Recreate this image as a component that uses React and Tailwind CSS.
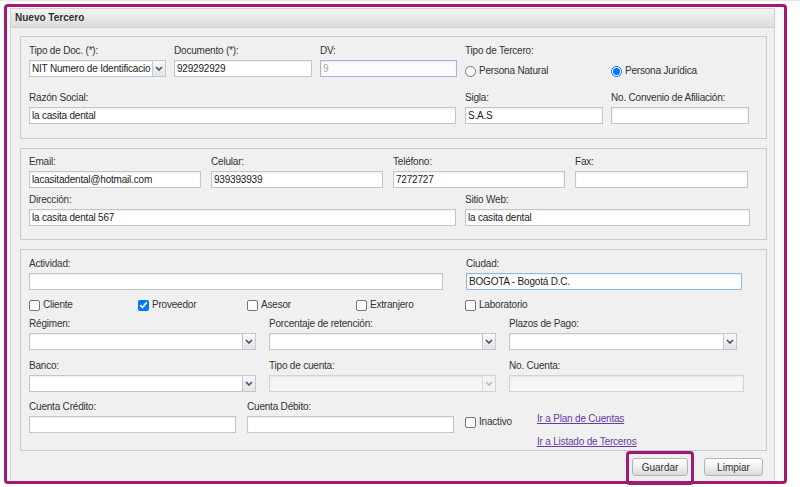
import React from "react";

const font = "font-['Liberation_Sans',Arial,sans-serif]";

function Chevron({ color = "#34508a" }) {
  return (
    <svg width="8" height="5" viewBox="0 0 8 5">
      <path d="M1 1 L4 4 L7 1" fill="none" stroke={color} strokeWidth="1.6" />
    </svg>
  );
}

function Label({ children }) {
  return <div className="h-[14px] leading-[14px] text-[#333] whitespace-nowrap tracking-[-0.2px]">{children}</div>;
}

function Input({ value = "", tone = "normal" }) {
  const tones = {
    normal: "border-[#c4c4ca] bg-white text-[#222]",
    dv: "border-[#a9b0e4] bg-[#fbfbff] text-[#aaa]",
    focus: "border-[#8fb6e6] bg-white text-[#222]",
    disabled: "border-[#d2d2d6] bg-[#f6f6f6] text-[#999]",
  };
  return (
    <div
      className={`mt-[2px] h-[17px] border ${tones[tone]} px-[2px] leading-[15px] tracking-[-0.2px] overflow-hidden whitespace-nowrap shadow-[inset_0_1px_2px_rgba(0,0,0,0.07)]`}
    >
      {value}
    </div>
  );
}

function Select({ value = "", disabled = false }) {
  return (
    <div
      className={`mt-[2px] h-[17px] border flex ${
        disabled ? "border-[#d2d2d6] bg-[#f4f4f4]" : "border-[#c4c4ca] bg-white"
      } shadow-[inset_0_1px_2px_rgba(0,0,0,0.07)]`}
    >
      <div className="flex-1 min-w-0 px-[2px] leading-[15px] tracking-[-0.2px] text-[#222] overflow-hidden whitespace-nowrap">
        {value}
      </div>
      <div
        className={`w-[13px] shrink-0 border-l flex items-center justify-center ${
          disabled ? "border-[#dadade] bg-[#f2f2f2]" : "border-[#c4c4ca] bg-gradient-to-b from-[#f8f8f8] to-[#e4e4e4]"
        }`}
      >
        <Chevron color={disabled ? "#b4b8c4" : "#34508a"} />
      </div>
    </div>
  );
}

function Field({ label, w, ml, children }) {
  return (
    <div className={`${w} ${ml || ""} shrink-0`}>
      <Label>{label}</Label>
      {children}
    </div>
  );
}

function Check({ label, checked, w }) {
  return (
    <div className={`${w || ""} h-[14px] flex items-center gap-[3px] shrink-0`}>
      {checked ? (
        <span className="w-[11px] h-[11px] rounded-[2px] bg-[#0075ff] flex items-center justify-center">
          <svg width="9" height="8" viewBox="0 0 9 8">
            <path d="M1.2 4.2 L3.5 6.4 L7.8 1.4" fill="none" stroke="#fff" strokeWidth="1.7" />
          </svg>
        </span>
      ) : (
        <span className="w-[11px] h-[11px] rounded-[2px] border border-[#767676] bg-white" />
      )}
      <span className="text-[#333] leading-[14px] tracking-[-0.2px] whitespace-nowrap">{label}</span>
    </div>
  );
}

function Radio({ label, checked, w }) {
  return (
    <div className={`${w || ""} h-[14px] flex items-center gap-[3px] shrink-0`}>
      {checked ? (
        <span className="w-[11px] h-[11px] rounded-full border border-[#0075ff] bg-white flex items-center justify-center">
          <span className="w-[7px] h-[7px] rounded-full bg-[#0075ff]" />
        </span>
      ) : (
        <span className="w-[11px] h-[11px] rounded-full border border-[#767676] bg-white" />
      )}
      <span className="text-[#333] leading-[14px] tracking-[-0.2px] whitespace-nowrap">{label}</span>
    </div>
  );
}

function Fieldset({ className, children }) {
  return <div className={`w-[747px] border border-[#c8c8d6] pl-[8px] ${className}`}>{children}</div>;
}

export default function App() {
  return (
    <div className={`w-[800px] h-[487px] bg-white relative overflow-hidden text-[10px] ${font}`}>
      <div className="h-[4px] border-t border-[#e4e4e4]" />
      <div className="ml-[4px] w-[783px] h-[480px] border-[3px] border-[#a01a70] rounded-[4px] bg-[#fbfbfb] pl-[3px] pt-[1px]">
        <div className="w-[765px] h-full border border-b-0 border-[#cfcfcf] bg-[#f0f0f0] flex flex-col">
          <div className="h-[19px] border-b border-[#d0d0d0] bg-gradient-to-b from-[#f3f3f3] to-[#dddddd] pl-[4px] leading-[18px] font-bold text-[#333]">
            Nuevo Tercero
          </div>

          <div className="pl-[9px] pt-[8px]">
            <Fieldset className="pt-[7px] pb-[14px]">
              <div className="flex items-start">
                <Field label="Tipo de Doc. (*):" w="w-[137px]">
                  <Select value="NIT Numero de Identificacio" />
                </Field>
                <Field label="Documento (*):" w="w-[138px]" ml="ml-[8px]">
                  <Input value="929292929" />
                </Field>
                <Field label="DV:" w="w-[137px]" ml="ml-[8px]">
                  <Input value="9" tone="dv" />
                </Field>
                <div className="ml-[8px] w-[284px] h-[33px]">
                  <Label>Tipo de Tercero:</Label>
                  <div className="mt-[6px] flex">
                    <Radio label="Persona Natural" w="w-[146px]" />
                    <Radio label="Persona Jurídica" checked />
                  </div>
                </div>
              </div>
              <div className="mt-[14px] flex items-start">
                <Field label="Razón Social:" w="w-[427px]">
                  <Input value="la casita dental" />
                </Field>
                <Field label="Sigla:" w="w-[138px]" ml="ml-[9px]">
                  <Input value="S.A.S" />
                </Field>
                <Field label="No. Convenio de Afiliación:" w="w-[138px]" ml="ml-[8px]">
                  <Input />
                </Field>
              </div>
            </Fieldset>

            <Fieldset className="mt-[9px] pt-[6px] pb-[13px]">
              <div className="flex items-start">
                <Field label="Email:" w="w-[172px]">
                  <Input value="lacasitadental@hotmail.com" />
                </Field>
                <Field label="Celular:" w="w-[172px]" ml="ml-[10px]">
                  <Input value="939393939" />
                </Field>
                <Field label="Teléfono:" w="w-[172px]" ml="ml-[10px]">
                  <Input value="7272727" />
                </Field>
                <Field label="Fax:" w="w-[173px]" ml="ml-[10px]">
                  <Input />
                </Field>
              </div>
              <div className="mt-[5px] flex items-start">
                <Field label="Dirección:" w="w-[427px]">
                  <Input value="la casita dental 567" />
                </Field>
                <Field label="Sitio Web:" w="w-[285px]" ml="ml-[9px]">
                  <Input value="la casita dental" />
                </Field>
              </div>
            </Fieldset>

            <Fieldset className="mt-[9px] pt-[7px] pb-[1px]">
              <div className="flex items-start">
                <Field label="Actividad:" w="w-[414px]">
                  <Input />
                </Field>
                <Field label="Ciudad:" w="w-[276px]" ml="ml-[23px]">
                  <Input value="BOGOTA - Bogotá D.C." tone="focus" />
                </Field>
              </div>
              <div className="mt-[8px] flex">
                <Check label="Cliente" w="w-[109px]" />
                <Check label="Proveedor" checked w="w-[109px]" />
                <Check label="Asesor" w="w-[109px]" />
                <Check label="Extranjero" w="w-[109px]" />
                <Check label="Laboratorio" />
              </div>
              <div className="mt-[5px] flex items-start">
                <Field label="Régimen:" w="w-[227px]">
                  <Select />
                </Field>
                <Field label="Porcentaje de retención:" w="w-[227px]" ml="ml-[13px]">
                  <Select />
                </Field>
                <Field label="Plazos de Pago:" w="w-[228px]" ml="ml-[13px]">
                  <Select />
                </Field>
              </div>
              <div className="mt-[9px] flex items-start">
                <Field label="Banco:" w="w-[227px]">
                  <Select />
                </Field>
                <Field label="Tipo de cuenta:" w="w-[227px]" ml="ml-[13px]">
                  <Select disabled />
                </Field>
                <Field label="No. Cuenta:" w="w-[235px]" ml="ml-[13px]">
                  <Input tone="disabled" />
                </Field>
              </div>
              <div className="mt-[8px] flex items-start">
                <Field label="Cuenta Crédito:" w="w-[207px]">
                  <Input />
                </Field>
                <Field label="Cuenta Débito:" w="w-[207px]" ml="ml-[11px]">
                  <Input />
                </Field>
                <div className="ml-[11px] mt-[15px] w-[72px]">
                  <Check label="Inactivo" />
                </div>
                <div className="flex flex-col tracking-[-0.2px]">
                  <a href="#" className="mt-[12px] leading-[14px] text-[#6b3aa8] underline">
                    Ir a Plan de Cuentas
                  </a>
                  <a href="#" className="mt-[9px] leading-[14px] text-[#6b3aa8] underline">
                    Ir a Listado de Terceros
                  </a>
                </div>
              </div>
            </Fieldset>

            <div className="w-[747px] mt-[7px] pr-[4px] flex justify-end gap-[16px]">
              <button className="w-[56px] h-[18px] border border-[#b4b4b4] rounded-[3px] bg-gradient-to-b from-white via-[#f0f0f0] to-[#dadada] text-[#333]">
                Guardar
              </button>
              <button className="w-[59px] h-[18px] border border-[#b4b4b4] rounded-[3px] bg-gradient-to-b from-white via-[#f0f0f0] to-[#dadada] text-[#333]">
                Limpiar
              </button>
            </div>
          </div>
        </div>
      </div>
      <div className="absolute left-[626px] top-[451px] w-[68px] h-[34px] border-[3px] border-[#a01a70] rounded-[4px]" />
    </div>
  );
}
